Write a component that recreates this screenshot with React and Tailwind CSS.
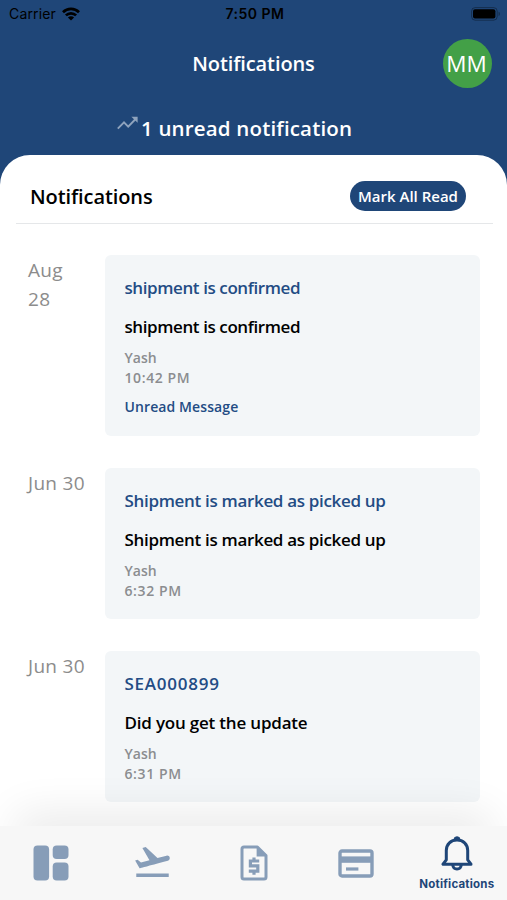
import React from 'react';

const notifications = [
  {
    id: 1,
    date: 'Aug 28',
    title: 'shipment is confirmed',
    body: 'shipment is confirmed',
    sender: 'Yash',
    time: '10:42 PM',
    unread: true,
    titleTracking: 'tracking-[-0.41px]',
    bodyTracking: 'tracking-[-0.41px]',
  },
  {
    id: 2,
    date: 'Jun 30',
    title: 'Shipment is marked as picked up',
    body: 'Shipment is marked as picked up',
    sender: 'Yash',
    time: '6:32 PM',
    unread: false,
    titleTracking: 'tracking-[-0.32px]',
    bodyTracking: 'tracking-[-0.32px]',
  },
  {
    id: 3,
    date: 'Jun 30',
    title: 'SEA000899',
    body: 'Did you get the update',
    sender: 'Yash',
    time: '6:31 PM',
    unread: false,
    titleTracking: 'tracking-[0.75px]',
    bodyTracking: 'tracking-[-0.2px]',
  },
];

const WifiIcon = () => (
  <svg className="w-[18px] h-[14px]" viewBox="0 0 18 14" fill="none" stroke="#000" strokeWidth="2.7">
    <path d="M1 5.2a11.4 11.4 0 0 1 16 0" />
    <path d="M3.9 8.4a7.2 7.2 0 0 1 10.2 0" />
    <path d="M9 13.6 5.9 10.5a4.4 4.4 0 0 1 6.2 0z" fill="#000" stroke="none" />
  </svg>
);

const BatteryIcon = () => (
  <svg className="w-[30px] h-[14px]" viewBox="0 0 30 14">
    <rect x="0.6" y="0.6" width="25.6" height="12.6" rx="3.6" fill="none" stroke="#000" strokeOpacity="0.35" />
    <rect x="2" y="2.2" width="22.4" height="9.4" rx="2" fill="#000" />
    <path d="M27.6 4.8c1.6.5 1.6 3.7 0 4.2z" fill="#000" fillOpacity="0.4" />
  </svg>
);

const TrendIcon = () => (
  <svg className="w-[22px] h-[14px]" viewBox="0 0 22 14" fill="none" stroke="#8fa3bd" strokeWidth="1.9">
    <path d="M.8 12.6 7 6.4l4.2 4.2L18.6 3" />
    <path d="M14.4.8h6.2v6z" fill="#8fa3bd" stroke="none" />
  </svg>
);

const DashboardIcon = () => (
  <svg className="w-9 h-9" viewBox="0 0 36 36" fill="#879db8">
    <rect x="0.5" y="0.5" width="15.6" height="35" rx="4" />
    <rect x="19.7" y="0.5" width="15.8" height="13.6" rx="4" />
    <rect x="19.7" y="17.6" width="15.8" height="17.9" rx="4" />
  </svg>
);

const FlightIcon = () => (
  <svg className="w-[41px] h-[41px]" viewBox="0 0 24 24" fill="#879db8">
    <path d="M2.5 19h19v2h-19zm19.57-9.36c-.21-.8-1.04-1.28-1.84-1.06L14.92 10l-6.9-6.43-1.93.51 4.14 7.17-4.97 1.33-1.97-1.54-1.45.39 2.59 4.49s7.12-1.9 16.57-4.43c.81-.23 1.28-1.05 1.07-1.85z" />
  </svg>
);

const InvoiceIcon = () => (
  <svg className="w-7 h-9" viewBox="0 0 28 36" fill="none" stroke="#879db8">
    <path d="M2 4a2 2 0 0 1 2-2h13.4L26 10.6V32a2 2 0 0 1-2 2H4a2 2 0 0 1-2-2z" strokeWidth="3" strokeLinejoin="round" />
    <path d="M16.600 2v9.400H26z" fill="#879db8" stroke="none" />
    <path d="M19.200 16H10.400v4.900h7.400v5.200H8.800M14 12.400V16M14 26v3.800" strokeWidth="3.200" />
  </svg>
);

const CardIcon = () => (
  <svg className="w-9 h-[29px]" viewBox="0 0 36 29" fill="none" stroke="#879db8">
    <rect x="2" y="2" width="32" height="25" rx="2" strokeWidth="3.4" />
    <path d="M2 10.6h32" strokeWidth="6.4" />
    <path d="M8 20h12.4" strokeWidth="3.2" />
  </svg>
);

const BellIcon = () => (
  <svg className="w-8 h-9" viewBox="0 0 32 36" fill="none" stroke="#1f4678" strokeWidth="3">
    <path d="M2 28.2h28l-3.3-4.4V14.6C26.7 8 22 4 16 4S5.3 8 5.3 14.6v9.2z" strokeLinejoin="round" />
    <path d="M13 3.4a3 2.6 0 0 1 6 0z" fill="#1f4678" strokeWidth="1" />
    <path d="M11.8 29c.4 5.400 8 5.400 8.400 0" />
  </svg>
);

const NotificationRow = ({ item }) => (
  <div className="flex items-start pl-7 pr-[27px]">
    <p className="w-[77px] pr-[18px] pt-px text-[19px] leading-[29px] tracking-[0.3px] text-[#8c8c8c]">{item.date}</p>
    <div className="flex-1 rounded-md bg-[#f3f6f8] px-[19.5px] pt-5 pb-[19px]">
      <h3 className={`text-[17px] leading-[25px] font-semibold text-[#234c84] whitespace-nowrap ${item.titleTracking}`}>{item.title}</h3>
      <p className={`mt-[14px] text-[17px] leading-[25px] font-semibold text-black whitespace-nowrap ${item.bodyTracking}`}>{item.body}</p>
      <p className="mt-[9px] text-sm leading-[19.5px] font-semibold text-[#8b8d90]">{item.sender}</p>
      <p className="text-sm leading-[19.5px] font-semibold tracking-[0.6px] text-[#8b8d90]">{item.time}</p>
      {item.unread && (
        <p className="mt-[10px] text-sm leading-5 font-semibold tracking-[0.1px] text-[#234c84]">Unread Message</p>
      )}
    </div>
  </div>
);

export default function App() {
  return (
    <div className="flex flex-col w-[507px] h-[900px] overflow-hidden bg-[#1f4678] font-['Open_Sans',sans-serif]">
      {/* Status bar */}
      <div className="grid grid-cols-3 items-center h-7 shrink-0 pl-[9px] pr-[6px] font-['Inter',sans-serif] text-sm text-black">
        <div className="flex items-center gap-[6px]">
          <span className="tracking-[0.15px]">Carrier</span>
          <WifiIcon />
        </div>
        <span className="text-center font-semibold tracking-[0.5px]">7:50 PM</span>
        <div className="flex justify-end">
          <BatteryIcon />
        </div>
      </div>

      {/* Header */}
      <header className="shrink-0 h-[127px] text-white">
        <div className="grid grid-cols-[64px_1fr_64px] items-center pt-[11px]">
          <h1 className="col-start-2 text-center text-[20px] leading-[30px] font-semibold tracking-[-0.1px]">Notifications</h1>
          <div className="flex items-center justify-center w-[49px] h-[49px] rounded-full bg-[#43a047] pr-[2px] text-[22.5px]">MM</div>
        </div>
        <div className="flex items-start pl-[117px] pt-[25px]">
          <div className="pt-[3px] pr-[2px]">
            <TrendIcon />
          </div>
          <p className="text-[20.5px] leading-[30px] font-semibold tracking-[0.17px] whitespace-nowrap">1 unread notification</p>
        </div>
      </header>

      {/* Notification list */}
      <main className="flex flex-col h-[671px] shrink-0 rounded-t-[30px] bg-white overflow-hidden">
        <div className="flex items-center justify-between shrink-0 h-[69px] ml-4 mr-[14px] pl-[14px] pr-[27px] pt-[14px] border-b border-[#e5e7e9]">
          <h2 className="pt-px text-[20px] leading-[30px] font-semibold tracking-[-0.1px] text-black">Notifications</h2>
          <button className="flex items-center justify-center w-[116px] h-[30px] rounded-full bg-[#1f4678] text-[15px] font-semibold text-white whitespace-nowrap">Mark All Read</button>
        </div>
        <div className="flex flex-col gap-8 pt-[31px]">
          {notifications.map((item) => (
            <NotificationRow key={item.id} item={item} />
          ))}
        </div>
      </main>

      {/* Bottom tabs */}
      <nav className="relative grid grid-cols-5 h-[74px] shrink-0 bg-[#f7f7f7] shadow-[0_-28px_44px_-16px_rgba(0,0,0,0.09)]">
        <div className="flex justify-center pt-[19px]"><DashboardIcon /></div>
        <div className="flex justify-center pt-[15px]"><FlightIcon /></div>
        <div className="flex justify-center pl-[2px] pt-[19px]"><InvoiceIcon /></div>
        <div className="flex justify-center pl-[2px] pt-[23px]"><CardIcon /></div>
        <div className="flex flex-col items-center pt-[10px] pl-px">
          <BellIcon />
          <span className="mt-[4px] font-['Inter',sans-serif] text-[11.5px] leading-4 font-bold tracking-[0.2px] text-[#1f4678]">Notifications</span>
        </div>
      </nav>
    </div>
  );
}
